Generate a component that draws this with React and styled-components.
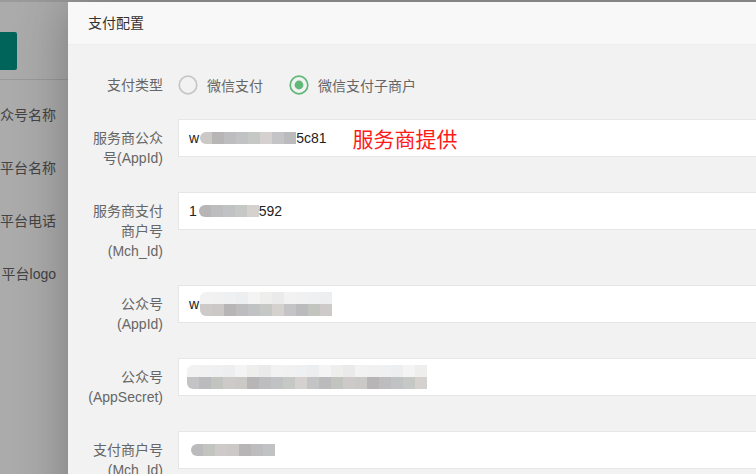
import React from "react";
import styled, { createGlobalStyle } from "styled-components";

const GlobalStyle = createGlobalStyle`
  html, body {
    margin: 0;
    padding: 0;
    width: 756px;
    height: 474px;
    overflow: hidden;
    background: #fff;
  }
  body {
    font-family: "Liberation Sans", "Noto Sans CJK SC", sans-serif;
    font-size: 14px;
  }
`;

const Page = styled.div`
  position: relative;
  width: 756px;
  height: 474px;
  overflow: hidden;
  background: #fff;
`;

const PageTop = styled.div`
  height: 2px;
  background: #e6e6e6;
`;

const PageHead = styled.div`
  height: 78px;
  padding-top: 30px;
  box-sizing: border-box;
  border-bottom: 1px solid #e4e4e4;
`;

const AddButton = styled.div`
  width: 77px;
  height: 38px;
  margin-left: -60px;
  background: #009688;
  border-radius: 2px;
`;

const PageLabels = styled.div`
  display: flex;
  flex-direction: column;
  gap: 33px;
  padding-top: 25px;
`;

const PageLabel = styled.div`
  width: 56px;
  display: flex;
  justify-content: flex-end;
  white-space: nowrap;
  line-height: 20px;
  color: #666;
`;

const Shade = styled.div`
  position: absolute;
  inset: 0;
  background: rgba(0, 0, 0, 0.33);
`;

const Layer = styled.div`
  position: absolute;
  left: 68px;
  top: 2px;
  width: 820px;
  height: 600px;
  background: #f2f2f2;
  box-shadow: 1px 1px 50px rgba(0, 0, 0, 0.3);
`;

const LayerTitle = styled.div`
  height: 42px;
  line-height: 42px;
  padding: 0 20px;
  background: #f8f8f8;
  border-bottom: 1px solid #eee;
  color: #333;
  font-size: 14px;
`;

const Form = styled.div`
  padding-top: 21px;
`;

const Item = styled.div`
  display: flex;
  align-items: flex-start;
  margin-bottom: 15px;
`;

const Label = styled.div`
  width: 80px;
  flex: none;
  padding: 9px 15px;
  line-height: 20px;
  text-align: right;
  color: #666;
  font-size: 14px;
`;

const RadioGroup = styled.div`
  display: flex;
  align-items: center;
  height: 38px;
  gap: 26px;
`;

const Radio = styled.div`
  display: flex;
  align-items: center;
  gap: 9px;
  color: #666;
  font-size: 14px;
`;

const Input = styled.div`
  flex: 1;
  height: 38px;
  box-sizing: border-box;
  border: 1px solid #e6e6e6;
  background: #fff;
  padding-left: 10px;
  display: flex;
  align-items: center;
  color: #222;
  font-size: 14px;
  white-space: nowrap;
`;

const Hint = styled.span`
  margin-left: 26px;
  color: #ff1a1a;
  font-size: 21px;
`;

const Mosaic = styled.span`
  display: inline-flex;
  flex-direction: column;
  margin-left: ${(p) => p.$left || 0}px;
  border-radius: 6px 0 0 6px;
  overflow: hidden;
`;

const MosaicRow = styled.span`
  display: flex;
`;

const Cell = styled.span`
  width: 12px;
  height: 12px;
  background: ${(p) => p.$c};
`;

const darks = ["#c4c4c6", "#cdcac9", "#bdbdbf", "#d4d1cf", "#c2c4c0", "#b7b5b5", "#c6c8c5", "#bbbabc", "#cbc9c6", "#c0c2c3"];
const lights = ["#f2f2f2", "#eeeeed", "#eceef0", "#f1f1f1", "#eaeaea", "#f4f4f4", "#eff0f2"];

const Blur = ({ cells, left, light }) => (
  <Mosaic $left={left}>
    {light && (
      <MosaicRow>
        {Array.from({ length: cells }, (_, i) => (
          <Cell key={i} $c={lights[(i * 3) % lights.length]} />
        ))}
      </MosaicRow>
    )}
    <MosaicRow>
      {Array.from({ length: cells }, (_, i) => (
        <Cell key={i} $c={darks[(i * 7 + cells) % darks.length]} />
      ))}
    </MosaicRow>
  </Mosaic>
);

const RadioIcon = ({ checked }) => (
  <svg width="20" height="20" viewBox="0 0 20 20">
    <circle cx="10" cy="10" r="8.8" fill="none" stroke={checked ? "#5fb878" : "#c6c6c6"} strokeWidth="1.7" />
    {checked && <circle cx="10" cy="10" r="4.4" fill="#5fb878" />}
  </svg>
);

export default function App() {
  return (
    <>
      <GlobalStyle />
      <Page>
        <PageTop />
        <PageHead>
          <AddButton />
        </PageHead>
        <PageLabels>
          <PageLabel>公众号名称</PageLabel>
          <PageLabel>平台名称</PageLabel>
          <PageLabel>平台电话</PageLabel>
          <PageLabel>平台logo</PageLabel>
        </PageLabels>
        <Shade />
        <Layer>
          <LayerTitle>支付配置</LayerTitle>
          <Form>
            <Item>
              <Label>支付类型</Label>
              <RadioGroup>
                <Radio>
                  <RadioIcon />
                  微信支付
                </Radio>
                <Radio>
                  <RadioIcon checked />
                  微信支付子商户
                </Radio>
              </RadioGroup>
            </Item>
            <Item>
              <Label>服务商公众号(AppId)</Label>
              <Input>
                w<Blur cells={8} left={1} />5c81
                <Hint>服务商提供</Hint>
              </Input>
            </Item>
            <Item>
              <Label>服务商支付商户号(Mch_Id)</Label>
              <Input>
                1<Blur cells={5} left={2} />592
              </Input>
            </Item>
            <Item>
              <Label>公众号(AppId)</Label>
              <Input>
                w<Blur cells={11} left={1} light />
              </Input>
            </Item>
            <Item>
              <Label>公众号(AppSecret)</Label>
              <Input>
                <Blur cells={20} left={-2} light />
              </Input>
            </Item>
            <Item>
              <Label>支付商户号(Mch_Id)</Label>
              <Input>
                <Blur cells={7} left={2} />
              </Input>
            </Item>
          </Form>
        </Layer>
      </Page>
    </>
  );
}
